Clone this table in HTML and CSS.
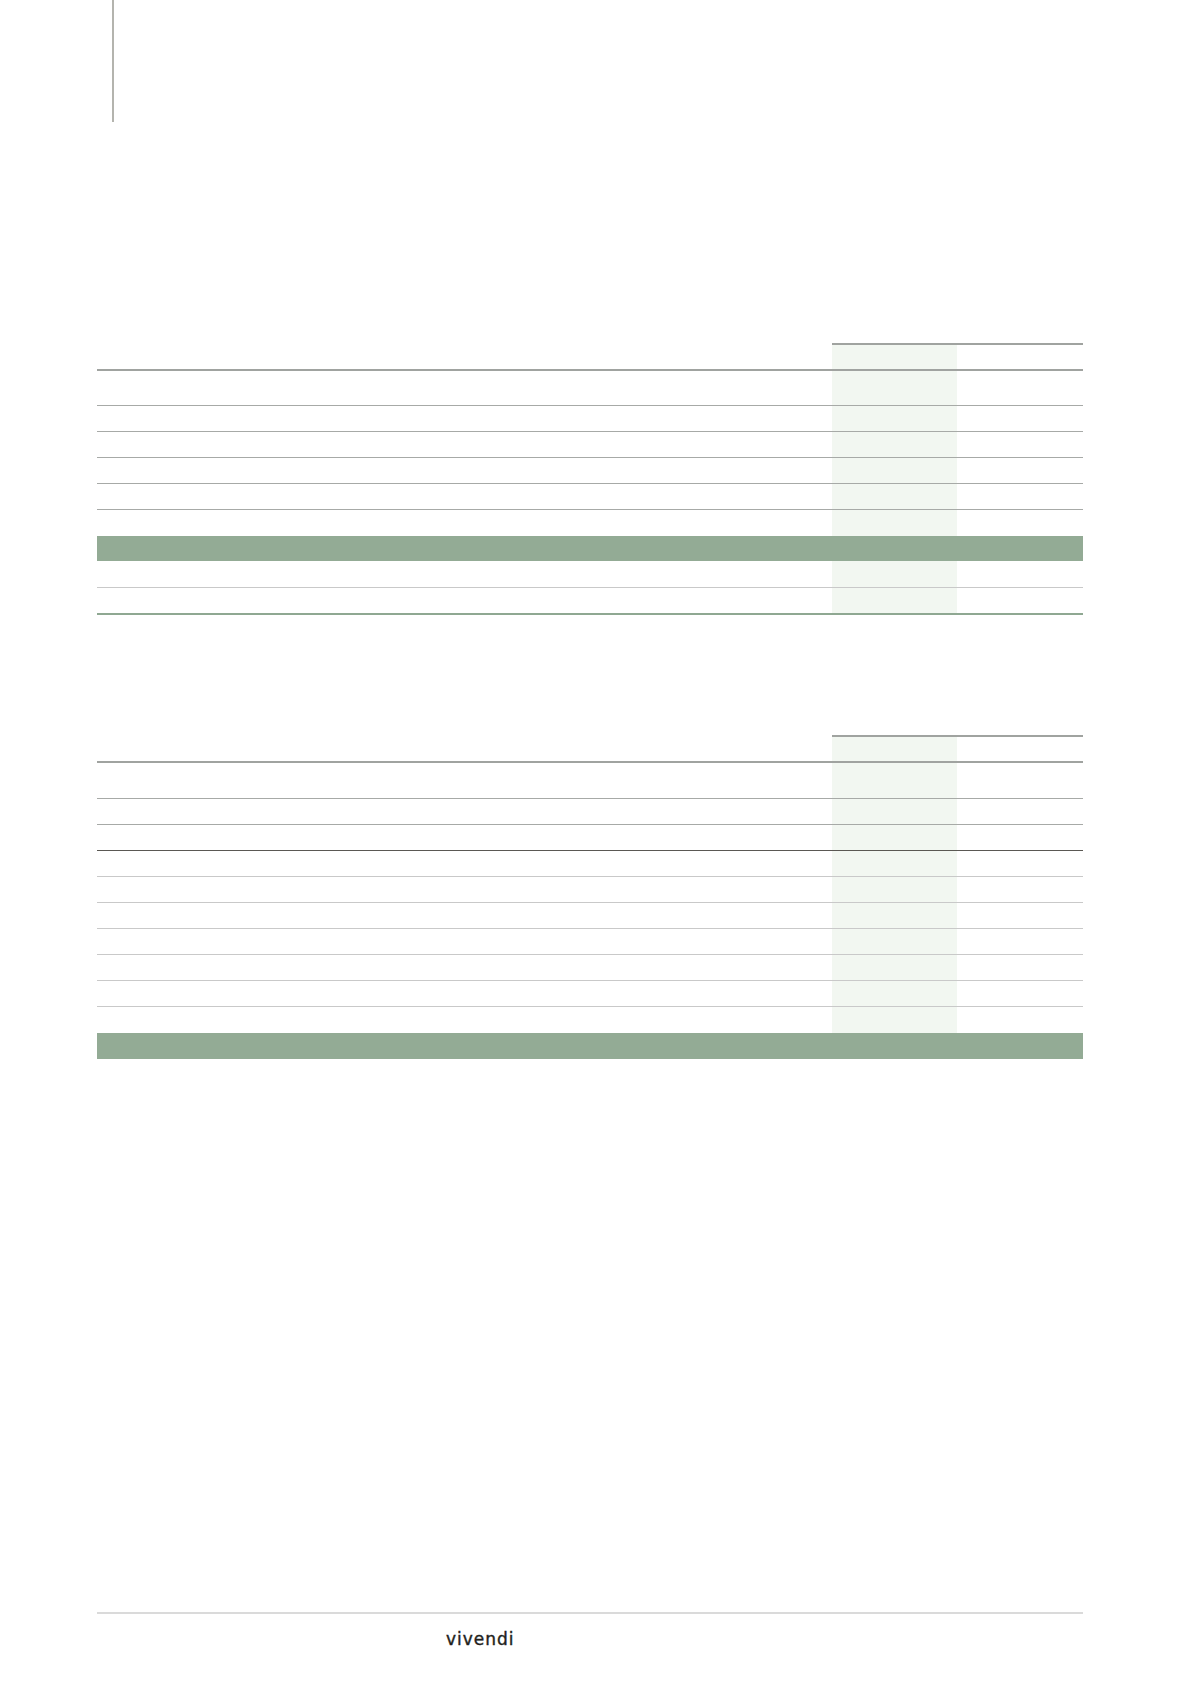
FILE: index.html
```html
<!DOCTYPE html>
<html lang="fr">
<head>
<meta charset="utf-8">
<title>Vivendi</title>
<link rel="stylesheet" href="styles.css">
</head>
<body>
<div class="page">
  <div class="margin-rule"></div>

  <div class="table t1">
    <div class="row head"><div class="c c1"></div><div class="c c2"></div><div class="c c3"></div></div>
    <div class="row tall"><div class="c c1"></div><div class="c c2"></div><div class="c c3"></div></div>
    <div class="row"><div class="c c1"></div><div class="c c2"></div><div class="c c3"></div></div>
    <div class="row"><div class="c c1"></div><div class="c c2"></div><div class="c c3"></div></div>
    <div class="row"><div class="c c1"></div><div class="c c2"></div><div class="c c3"></div></div>
    <div class="row"><div class="c c1"></div><div class="c c2"></div><div class="c c3"></div></div>
    <div class="row plain"><div class="c c1"></div><div class="c c2"></div><div class="c c3"></div></div>
    <div class="row total"><div class="c c1"></div><div class="c c2"></div><div class="c c3"></div></div>
    <div class="row light r8"><div class="c c1"></div><div class="c c2"></div><div class="c c3"></div></div>
    <div class="row last"><div class="c c1"></div><div class="c c2"></div><div class="c c3"></div></div>
  </div>

  <div class="table t2">
    <div class="row head"><div class="c c1"></div><div class="c c2"></div><div class="c c3"></div></div>
    <div class="row tall"><div class="c c1"></div><div class="c c2"></div><div class="c c3"></div></div>
    <div class="row"><div class="c c1"></div><div class="c c2"></div><div class="c c3"></div></div>
    <div class="row dark"><div class="c c1"></div><div class="c c2"></div><div class="c c3"></div></div>
    <div class="row light"><div class="c c1"></div><div class="c c2"></div><div class="c c3"></div></div>
    <div class="row light"><div class="c c1"></div><div class="c c2"></div><div class="c c3"></div></div>
    <div class="row light"><div class="c c1"></div><div class="c c2"></div><div class="c c3"></div></div>
    <div class="row light"><div class="c c1"></div><div class="c c2"></div><div class="c c3"></div></div>
    <div class="row light"><div class="c c1"></div><div class="c c2"></div><div class="c c3"></div></div>
    <div class="row light"><div class="c c1"></div><div class="c c2"></div><div class="c c3"></div></div>
    <div class="row plain"><div class="c c1"></div><div class="c c2"></div><div class="c c3"></div></div>
    <div class="row total"><div class="c c1"></div><div class="c c2"></div><div class="c c3"></div></div>
  </div>

  <footer class="footer">
    <div class="footer-rule"></div>
    <div class="logo">vivendi</div>
  </footer>
</div>
</body>
</html>
```

FILE: styles.css
```css
html, body {
  margin: 0;
  padding: 0;
  background: #ffffff;
}

.page {
  width: 1196px;
  height: 1692px;
  position: relative;
  overflow: hidden;
  font-family: "DejaVu Sans", "Open Sans", sans-serif;
}

.margin-rule {
  margin-left: 112px;
  width: 2px;
  height: 122px;
  background: #b4b4ae;
}

.table {
  margin-left: 97px;
  width: 986px;
}

.t1 {
  margin-top: 221px;
}

.t2 {
  margin-top: 120px;
}

.row {
  display: grid;
  grid-template-columns: 735px 125px 126px;
  height: 26px;
  box-sizing: border-box;
  border-bottom: 1px solid #a7aaa7;
}

.c2 {
  background: #f2f7f1;
}

.row.head {
  height: 28px;
  border-bottom: 2px solid #a0a3a0;
}

.row.head .c2,
.row.head .c3 {
  border-top: 2px solid #a0a3a0;
}

.row.tall {
  height: 35px;
}

.row.plain {
  border-bottom: none;
}

.row.total {
  height: 25px;
  border-bottom: none;
  background: #93ab95;
}

.row.total .c2 {
  background: transparent;
}

.row.r8 {
  height: 27px;
}

.row.light {
  border-bottom-color: #c9c9c9;
}

.row.dark {
  border-bottom-color: #5a5853;
}

.row.last {
  height: 27px;
  border-bottom: 2px solid #8fa892;
}

.t2 .row.tall {
  height: 36px;
}

.t2 .row.total {
  height: 26px;
}

.footer {
  margin-top: 553px;
  margin-left: 97px;
  width: 986px;
}

.footer-rule {
  height: 2px;
  background: #dadada;
}

.logo {
  margin-top: 15px;
  margin-left: 349px;
  font-family: "DejaVu Sans", "Open Sans", sans-serif;
  font-size: 17px;
  line-height: 20px;
  letter-spacing: 1px;
  color: #231f1c;
  -webkit-text-stroke: 0.4px #231f1c;
}
```
